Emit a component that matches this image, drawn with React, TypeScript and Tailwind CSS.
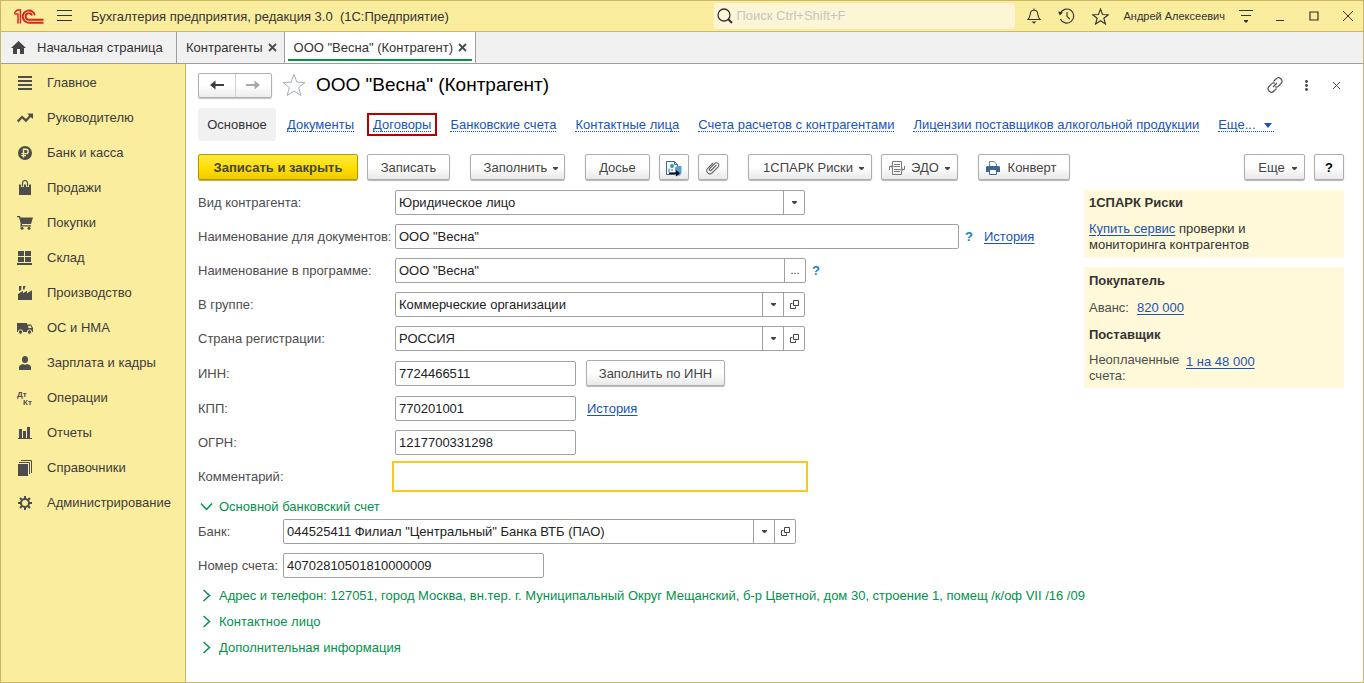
import React, { useState } from 'react';
import clsx from 'clsx';

type IconProps = { className?: string };

/* ---------- Icons ---------- */

const Logo = () => (
  <svg width="30" height="15" viewBox="0 0 30 15" fill="none" stroke="#d9241f" strokeWidth="1.9" aria-label="1С">
    <path d="M0 4.2 L3.2 1 H6.4 V14.6 M4 4.5 V14.6 M0.6 5 H4" strokeWidth="1.5" />
    <path d="M20.8 6.2 A6.1 6.1 0 1 0 15 13.7 H29.5" />
    <path d="M17.9 6.6 A3.2 3.2 0 1 0 15 10.7 H29.5" />
  </svg>
);

const MenuIcon = () => (
  <svg width="15" height="12" viewBox="0 0 15 12" fill="#333">
    <path d="M0 0h15v1H0zM0 5h15v1H0zM0 10h15v1H0z" />
  </svg>
);

const SearchIcon = () => (
  <svg width="16" height="16" viewBox="0 0 16 16" fill="none" stroke="#333">
    <circle cx="7" cy="7" r="6" strokeWidth="1.3" />
    <path d="M11 11 L15 15" strokeWidth="2" />
  </svg>
);

const BellIcon = () => (
  <svg width="14" height="16" viewBox="0 0 14 16" fill="none" stroke="#333" strokeWidth="1.1">
    <path d="M7 0.5 V2 M1 11.5 C3 9.5 3 8.5 3.2 6 C3.4 3.5 5 2.2 7 2.2 C9 2.2 10.6 3.5 10.8 6 C11 8.5 11 9.5 13 11.5 Z" />
    <path d="M4.5 13.5 H9.5 L7 15.8 Z" fill="#333" stroke="none" />
  </svg>
);

const HistoryIcon = () => (
  <svg width="17" height="16" viewBox="0 0 17 16" fill="none" stroke="#333" strokeWidth="1.2">
    <path d="M2.2 5.5 A7 7 0 1 1 2.4 11" />
    <path d="M9 4 V8.3 L11.8 11.2" />
    <path d="M0 3.6 L5 4.6 L1.8 7.6 Z" fill="#333" stroke="none" />
  </svg>
);

const StarIcon = ({ className }: IconProps) => (
  <svg className={className} viewBox="0 0 24 24" fill="none" stroke="currentColor">
    <path d="M12 1.5 L14.9 9.2 L23 9.5 L16.7 14.5 L18.9 22.5 L12 18 L5.1 22.5 L7.3 14.5 L1 9.5 L9.1 9.2 Z" />
  </svg>
);

const SettingsMenuIcon = () => (
  <svg width="14" height="14" viewBox="0 0 14 14" fill="#333">
    <path d="M0 1h14v1H0zM2 6h10v1H2zM5 11h4v1L7 14L5 12z" />
  </svg>
);

const CloseIcon = () => (
  <svg width="9" height="9" viewBox="0 0 9 9" stroke="#4a4a4a" strokeWidth="1.8">
    <path d="M1 1 L8 8 M8 1 L1 8" />
  </svg>
);

const Caret = ({ className }: IconProps) => (
  <svg className={clsx('shrink-0', className)} width="5" height="3" viewBox="0 0 5 3" fill="currentColor">
    <path d="M0 0h5v1L3 3H2L0 1z" />
  </svg>
);

const OpenIcon = () => (
  <svg width="9" height="9" viewBox="0 0 9 9" fill="none" stroke="#444">
    <path d="M3.5 0.5h5v5h-5z M2.5 3.5h-2v5h5v-2" />
  </svg>
);

const Chevron = ({ open }: { open?: boolean }) => (
  <svg className={clsx('h-[13px] w-[13px]', open && 'rotate-90')} viewBox="0 0 13 13" fill="none" stroke="#00924a" strokeWidth="1.5">
    <path d="M3.5 1 L9.5 6.5 L3.5 12" />
  </svg>
);

/* ---------- Section menu ---------- */

const SideIcon: React.FC<{ children: React.ReactNode }> = ({ children }) => (
  <svg width="16" height="16" viewBox="0 0 16 16" fill="#4d4d4d">
    {children}
  </svg>
);

const sections = [
  { label: 'Главное', icon: <path d="M1 1h14v2H1zM1 5h14v2H1zM1 9h14v2H1zM1 13h14v2H1z" /> },
  {
    label: 'Руководителю',
    icon: <path d="M0 10.5 L5 5.5 L9 9 L12.2 5.6 L10.2 3.4 H16 V9 L13.8 7 L9 12.2 L5 8.6 L1.5 12.5 Z" />,
  },
  {
    label: 'Банк и касса',
    icon: (
      <>
        <circle cx="8" cy="8" r="7" />
        <path d="M6.5 12.5 V4.2 H9 A2.2 2.2 0 0 1 9 8.6 H4.5 M4.5 10.6 H9" fill="none" stroke="#fbed9e" strokeWidth="1.4" />
      </>
    ),
  },
  {
    label: 'Продажи',
    icon: (
      <>
        <path d="M2 4.5 H14 V15 H2 Z" />
        <path d="M5.5 7 V3.5 A2.5 2.5 0 0 1 10.5 3.5 V7" fill="none" stroke="#fbed9e" strokeWidth="3" />
        <path d="M5.5 6.5 V3 A2.5 2.5 0 0 1 10.5 3 V6.5" fill="none" stroke="#4d4d4d" strokeWidth="1.2" />
      </>
    ),
  },
  {
    label: 'Покупки',
    icon: (
      <>
        <path d="M0 1 H3 L3.6 2.5 H16 L14 9 H5.2 L4.8 10.3 H14 V11.6 H3 L3.8 8.8 L2 2.3 H0 Z" />
        <circle cx="5" cy="13.3" r="1.5" />
        <circle cx="12" cy="13.3" r="1.5" />
      </>
    ),
  },
  { label: 'Склад', icon: <path d="M1 1h6v5H1zM8 1h6v5H8zM1 7h6v5H1zM8 7h6v5H8zM0 13h15v2H0z" /> },
  {
    label: 'Производство',
    icon: <path d="M1 15 V9 L6 5.8 V8.2 L10 5.8 V8.2 L15 5.2 V15 Z M2 1 H4.5 L4.2 5 L2 6.3 Z M6 1 H8.5 L7.5 4.5 L6 4.5 Z" />,
  },
  {
    label: 'ОС и НМА',
    icon: (
      <>
        <path d="M0 3 H10 V12 H0 Z M10 4.5 H14 L16 8 V12 H10 Z" />
        <path d="M11.3 5.7 H13.5 L14.7 8 H11.3 Z" fill="#fbed9e" />
        <circle cx="3.5" cy="12" r="2.2" stroke="#fbed9e" />
        <circle cx="12.5" cy="12" r="2.2" stroke="#fbed9e" />
      </>
    ),
  },
  {
    label: 'Зарплата и кадры',
    icon: (
      <>
        <ellipse cx="8" cy="4.5" rx="3" ry="3.5" />
        <path d="M2 15 V12 C2 10.5 4 9.5 6 9 Q8 10.5 10 9 C12 9.5 14 10.5 14 12 V15 Z" />
      </>
    ),
  },
  {
    label: 'Операции',
    icon: (
      <g fontFamily="Liberation Sans" fontWeight="700" fontSize="8">
        <text x="0" y="7">Дт</text>
        <text x="6" y="15">Кт</text>
      </g>
    ),
  },
  { label: 'Отчеты', icon: <path d="M2 4h3v9H2zM6 6h3v7H6zM10 2h3v11h-3zM1 13h14v1H1z" /> },
  {
    label: 'Справочники',
    icon: (
      <>
        <path d="M1 4h10v12H1z" />
        <path d="M2 2.5 H12.5 V14 M4 0.5 H14.5 V13" fill="none" stroke="#4d4d4d" />
      </>
    ),
  },
  {
    label: 'Администрирование',
    icon: (
      <>
        <circle cx="8" cy="8" r="4" fill="none" stroke="#4d4d4d" strokeWidth="2" />
        <path
          d="M8 1V4M8 12V15M1 8H4M12 8H15M3 3L5 5M11 11L13 13M13 3L11 5M3 13L5 11"
          stroke="#4d4d4d"
          strokeWidth="2"
        />
      </>
    ),
  },
];

const SectionMenu = () => (
  <nav className="w-[185px] shrink-0 border-r border-[#c8b866] bg-[#fbed9e] pt-px">
    <ul>
      {sections.map(s => (
        <li key={s.label}>
          <a href="#" className="flex h-[35px] items-center gap-[14px] pl-4 text-[#3b3b3b]">
            <SideIcon>{s.icon}</SideIcon>
            {s.label}
          </a>
        </li>
      ))}
    </ul>
  </nav>
);

/* ---------- Window header ---------- */

const TitleBar = () => (
  <header className="flex h-[31px] items-center border-b border-[#c8b866] bg-[#fbed9e] pl-[13px] pr-[10px] text-[#333]">
    <Logo />
    <button type="button" aria-label="Меню" className="ml-[13px]">
      <MenuIcon />
    </button>
    <h1 className="ml-[19px] whitespace-nowrap pt-0.5">Бухгалтерия предприятия, редакция 3.0&nbsp; (1С:Предприятие)</h1>
    <label className="ml-auto flex h-[26px] w-[301px] items-center gap-[3px] rounded-[3px] bg-[#fdf6d6] pl-[3px]">
      <SearchIcon />
      <input
        type="search"
        aria-label="Поиск"
        placeholder="Поиск Ctrl+Shift+F"
        className="min-w-0 flex-1 bg-transparent outline-none placeholder:text-[#c4c4c4]"
      />
    </label>
    <div className="ml-3 flex items-center gap-[17px]">
      <button type="button" aria-label="Уведомления"><BellIcon /></button>
      <button type="button" aria-label="История"><HistoryIcon /></button>
      <button type="button" aria-label="Избранное"><StarIcon className="h-[17px] w-[17px] stroke-[1.6]" /></button>
    </div>
    <span className="ml-[14px] whitespace-nowrap text-[11px]">Андрей Алексеевич</span>
    <button type="button" aria-label="Настройки" className="ml-[14px]"><SettingsMenuIcon /></button>
    <div className="ml-[22px] flex items-center gap-6">
      <button type="button" aria-label="Свернуть">
        <svg width="10" height="10" viewBox="0 0 10 10" fill="#333"><path d="M1 9h8v1H1z" /></svg>
      </button>
      <button type="button" aria-label="Развернуть">
        <svg width="10" height="10" viewBox="0 0 10 10" fill="none" stroke="#333" strokeWidth="1.2"><path d="M1 1h8v8H1z" /></svg>
      </button>
      <button type="button" aria-label="Закрыть">
        <svg width="10" height="10" viewBox="0 0 10 10" stroke="#333"><path d="M0 0 L10 10 M10 0 L0 10" /></svg>
      </button>
    </div>
  </header>
);

const WindowTabs = () => (
  <div className="flex h-8 border-b border-[#9f9f9f] bg-[#f1f1f1] text-[#333]">
    <a href="#" className="flex w-[176px] items-center gap-[11px] border-r border-[#9f9f9f] pl-[10px]">
      <svg width="15" height="13" viewBox="0 0 15 13" fill="#444">
        <path d="M7.5 0 L15 7 H13 V13 H9 V8 H6 V13 H2 V7 H0 Z" />
      </svg>
      Начальная страница
    </a>
    <div className="flex items-center gap-[5px] border-r border-[#9f9f9f] pl-[9px] pr-[7px]">
      <a href="#">Контрагенты</a>
      <button type="button" aria-label="Закрыть Контрагенты"><CloseIcon /></button>
    </div>
    <div className="flex flex-col border-r border-[#9f9f9f] bg-white px-[3px] pb-[2px]">
      <div className="flex flex-1 items-center gap-[5px] border-b-2 border-[#009646] pl-[6px] pr-[5px] pt-1">
        <a href="#">ООО "Весна" (Контрагент)</a>
        <button type="button" aria-label="Закрыть ООО Весна"><CloseIcon /></button>
      </div>
    </div>
  </div>
);

/* ---------- Form controls ---------- */

type BtnProps = React.ButtonHTMLAttributes<HTMLButtonElement> & { primary?: boolean };

const Btn: React.FC<BtnProps> = ({ primary, className, children, ...rest }) => (
  <button
    type="button"
    className={clsx(
      'flex h-[26px] shrink-0 items-center justify-center whitespace-nowrap rounded-[2px] border pt-0.5',
      primary
        ? 'border-[#b09c00] bg-linear-to-b from-[#ffe838] via-[#ffe000] to-[#f0cb00] font-bold text-[#444] shadow-[0_1px_1px_#b5a850]'
        : 'border-[#aeaeae] bg-linear-to-b from-white from-50% to-[#e8e8e8] text-[#444] shadow-[0_1px_1px_#b5b5b5]',
      className,
    )}
    {...rest}
  >
    {children}
  </button>
);

const fieldBox = 'h-[25px] rounded-[2px] border border-[#a0a0a0] bg-white text-[#222]';

type RowProps = { id: string; label: string; labelClass?: string; children: React.ReactNode };

const Row: React.FC<RowProps> = ({ id, label, labelClass = 'w-[197px]', children }) => (
  <div className="flex items-center">
    <label htmlFor={id} className={clsx('shrink-0 whitespace-nowrap text-[#4d4d4d]', labelClass)}>
      {label}
    </label>
    {children}
  </div>
);

const TextField = ({ id, value, className }: { id: string; value: string; className?: string }) => (
  <input id={id} defaultValue={value} className={clsx(fieldBox, 'px-[3px]', className)} />
);

type SelectFieldProps = { id: string; value: string; className?: string; withOpen?: boolean };

const SelectField = ({ id, value, className, withOpen }: SelectFieldProps) => (
  <div className={clsx(fieldBox, 'flex', className)}>
    <div className="relative min-w-0 flex-1">
      <select id={id} className="h-full w-full appearance-none pl-[3px] outline-none">
        <option>{value}</option>
      </select>
      <span className="pointer-events-none absolute inset-y-0 right-0 flex w-[21px] items-center justify-center border-l border-[#a0a0a0]">
        <Caret className="text-[#444]" />
      </span>
    </div>
    {withOpen && (
      <button type="button" aria-label="Открыть" className="flex w-[21px] items-center justify-center border-l border-[#a0a0a0]">
        <OpenIcon />
      </button>
    )}
  </div>
);

const link = 'text-[#1a54b8] underline underline-offset-2';

/* ---------- Page ---------- */

const FormHeader = () => (
  <div className="flex h-[26px] items-center">
    <div className="flex h-[25px] w-[74px] rounded-[2px] border border-[#b0b0b0] bg-linear-to-b from-white from-50% to-[#ececec] shadow-[0_1px_1px_#c0c0c0]">
      <button type="button" aria-label="Назад" className="flex flex-1 items-center justify-center border-r border-[#cfcfcf]">
        <svg width="14" height="10" viewBox="0 0 14 10" fill="#3c3c3c"><path d="M0 5 L5.5 0.5 V4 H14 V6 H5.5 V9.5 Z" /></svg>
      </button>
      <button type="button" aria-label="Вперед" className="flex flex-1 items-center justify-center">
        <svg width="14" height="10" viewBox="0 0 14 10" fill="#a8a8a8"><path d="M14 5 L8.5 0.5 V4 H0 V6 H8.5 V9.5 Z" /></svg>
      </button>
    </div>
    <button type="button" aria-label="В избранное" className="ml-[10px]">
      <StarIcon className="h-6 w-6 text-[#a9b0b6]" />
    </button>
    <h2 className="ml-[10px] whitespace-nowrap text-[19px] text-black">ООО "Весна" (Контрагент)</h2>
    <div className="ml-auto flex items-center gap-[19px] pr-px">
      <button type="button" aria-label="Получить ссылку">
        <svg width="16" height="16" viewBox="0 0 16 16" fill="none" stroke="#555" strokeWidth="1.2">
          <path d="M6.5 4.5 L9 2 A3 3 0 0 1 14 6.5 L11.2 9.3 A2.8 2.8 0 0 1 8 9.8" />
          <path d="M9.5 11.5 L7 14 A3 3 0 0 1 2 9.5 L4.8 6.7 A2.8 2.8 0 0 1 8 6.2" />
          <path d="M6 10 L10 6" />
        </svg>
      </button>
      <button type="button" aria-label="Еще действия" className="px-[3px]">
        <svg width="3" height="11" viewBox="0 0 3 11" fill="#444">
          <circle cx="1.5" cy="1.5" r="1.4" />
          <circle cx="1.5" cy="5.5" r="1.4" />
          <circle cx="1.5" cy="9.5" r="1.4" />
        </svg>
      </button>
      <button type="button" aria-label="Закрыть" className="px-[3px]">
        <svg width="7" height="7" viewBox="0 0 7 7" stroke="#444"><path d="M0 0 L7 7 M7 0 L0 7" /></svg>
      </button>
    </div>
  </div>
);

const formLinks = [
  'Документы',
  'Договоры',
  'Банковские счета',
  'Контактные лица',
  'Счета расчетов с контрагентами',
  'Лицензии поставщиков алкогольной продукции',
];

const dotted = 'border-b border-dotted border-[#1a54b8] pt-[2px] leading-[12px] text-[#1a54b8]';

const FormNav = () => (
  <nav className="mt-[10px] flex h-[33px] items-center gap-[19px] whitespace-nowrap">
    <span className="-mr-2 flex h-full w-[78px] items-center justify-center rounded-[3px] bg-[#f1f1f1] text-[#333]">
      Основное
    </span>
    {formLinks.map(name => (
      <span key={name} className={clsx(name === 'Договоры' && '-mx-[6px] border-2 border-[#b80000] px-1 py-[2px]')}>
        <a href="#" className={clsx('block', dotted)}>{name}</a>
      </span>
    ))}
    <a href="#" className={clsx('flex items-center gap-2 pr-[2px]', dotted)}>
      Еще...
      <svg width="8" height="5" viewBox="0 0 8 5" fill="#1a54b8"><path d="M0 0h8L4 5z" /></svg>
    </a>
  </nav>
);

const Toolbar = () => (
  <div className="mt-[13px] flex items-center gap-[9px]">
    <Btn primary className="w-[160px]">Записать и закрыть</Btn>
    <Btn className="w-[83px]">Записать</Btn>
    <Btn className="ml-[11px] w-[95px] gap-[6px] pl-[7px]">Заполнить <Caret /></Btn>
    <Btn className="ml-[11px] w-[65px]">Досье</Btn>
    <Btn className="w-[30px]" aria-label="Перейти">
      <svg width="18" height="17" viewBox="0 0 18 17" fill="none">
        <path d="M1.5 1.5 H9.5 L12.5 4.5 V14.5 H1.5 Z" fill="#fff" stroke="#3d6590" />
        <path d="M9.5 1.5 V4.5 H12.5" stroke="#3d6590" />
        <circle cx="7" cy="6" r="2" fill="#1f9cc4" />
        <path d="M4 8.5 V12 M6 10 H8" stroke="#3d6590" />
        <path d="M10 7.5 L12 6 H16.5 V13 L15 15.5 H10 Z" fill="#5a9dd2" />
        <path d="M4 13.2 H13" stroke="#111" strokeWidth="1.6" />
        <path d="M11 10 L15 13.2 L11 16.4 Z" fill="#111" />
      </svg>
    </Btn>
    <Btn className="w-[30px]" aria-label="Присоединенные файлы">
      <svg width="14" height="14" viewBox="0 0 14 14" fill="none" stroke="#666" strokeWidth="1.1">
        <path d="M10.5 4 L5 9.5 A1.2 1.2 0 0 1 3.4 7.9 L8.8 2.5 A2.3 2.3 0 0 1 12.2 5.8 L6 12 A3.2 3.2 0 0 1 1.5 7.5 L7 2" />
      </svg>
    </Btn>
    <Btn className="ml-[11px] w-[124px] gap-[6px] pl-[7px]">1СПАРК Риски <Caret /></Btn>
    <Btn className="w-[77px] gap-[6px]">
      <svg width="16" height="14" viewBox="0 0 16 14" fill="none" stroke="#777">
        <path d="M3.5 4 V0.5 H12.5 V7 M3.5 7 V13.5 H12.5 V10 M5 3.5 H11 M5 5.5 H11 M5 8.5 H11 M5 10.5 H11" />
        <path d="M0.5 9 V5.5 H3 M15.5 5 V8.5 H13" />
        <path d="M2.5 3.5 L5 5.5 L2.5 7.5 Z M13.5 6.5 L11 8.5 L13.5 10.5 Z" fill="#777" stroke="none" />
      </svg>
      <span className="flex items-center gap-[6px]">ЭДО <Caret /></span>
    </Btn>
    <Btn className="ml-[11px] w-[92px] gap-2 pr-[6px]">
      <svg width="14" height="14" viewBox="0 0 14 14">
        <path d="M3.5 6 V0.5 H8 L10.5 3 V6" fill="#fff" stroke="#5f7fa3" />
        <path d="M1 5 H13 L14 6 V11 H0 V6 Z" fill="#3f668f" />
        <path d="M3.5 8.5 H10.5 V13.5 H3.5 Z" fill="#fff" stroke="#3f668f" />
      </svg>
      Конверт
    </Btn>
    <Btn className="ml-auto w-[61px] gap-[7px] pl-[6px]">Еще <Caret /></Btn>
    <Btn className="w-[30px]" aria-label="Справка"><b className="text-black">?</b></Btn>
  </div>
);

const Help = () => (
  <button type="button" aria-label="Подсказка" className="ml-[6px] w-2 font-bold text-[#1583c4]">?</button>
);

const InfoPanel = () => (
  <aside className="flex w-[260px] shrink-0 flex-col gap-[9px] leading-4 text-[#333]">
    <section className="bg-[#fff9d9] px-[5px] py-[5px]">
      <h3 className="font-bold">1СПАРК Риски</h3>
      <p className="mt-[10px] w-[170px]">
        <a href="#" className={link}>Купить сервис</a> проверки и мониторинга контрагентов
      </p>
    </section>
    <section className="bg-[#fff9d9] px-[5px] pb-[4px] pt-[6px]">
      <h3 className="font-bold">Покупатель</h3>
      <div className="mt-[11px] flex gap-2 text-[#4d4d4d]">
        Аванс: <a href="#" className={link}>820 000</a>
      </div>
      <h3 className="mt-[11px] font-bold">Поставщик</h3>
      <div className="mt-[9px] flex gap-[9px] text-[#4d4d4d]">
        <span className="w-[88px]">Неоплаченные счета:</span>
        <a href="#" className={clsx(link, 'pt-0.5')}>1 на 48 000</a>
      </div>
    </section>
  </aside>
);

const Group: React.FC<{ title: string; open?: boolean; onClick?: () => void }> = ({ title, open, onClick }) => (
  <button type="button" onClick={onClick} aria-expanded={!!open} className="flex h-[26px] items-center gap-[6px] whitespace-nowrap pl-[2px] text-[#00924a]">
    <Chevron open={open} />
    <span className="pt-0.5">{title}</span>
  </button>
);

export default function App() {
  const [bankOpen, setBankOpen] = useState(true);

  return (
    <div className="flex min-h-screen flex-col border border-[#c8b866] bg-white font-['Liberation_Sans',Arial,sans-serif] text-[13px]">
      <TitleBar />
      <WindowTabs />
      <div className="flex flex-1">
        <SectionMenu />
        <main className="min-w-0 flex-1 pb-5 pl-3 pr-[19px] pt-2">
          <FormHeader />
          <FormNav />
          <Toolbar />

          <div className="mt-[10px] flex">
            <form className="min-w-0 flex-1">
              <div className="flex flex-col gap-[9px]">
                <Row id="kind" label="Вид контрагента:">
                  <SelectField id="kind" value="Юридическое лицо" className="w-[410px]" />
                </Row>
                <Row id="docName" label="Наименование для документов:">
                  <TextField id="docName" value='ООО "Весна"' className="w-[564px]" />
                  <Help />
                  <a href="#" className={clsx(link, 'ml-[11px]')}>История</a>
                </Row>
                <Row id="appName" label="Наименование в программе:">
                  <div className={clsx(fieldBox, 'flex w-[411px]')}>
                    <input id="appName" defaultValue='ООО "Весна"' className="min-w-0 flex-1 px-[3px] outline-none" />
                    <button type="button" aria-label="Выбрать" className="w-[21px] border-l border-[#a0a0a0] text-[11px]">...</button>
                  </div>
                  <Help />
                </Row>
                <Row id="group" label="В группе:">
                  <SelectField id="group" value="Коммерческие организации" className="w-[410px]" withOpen />
                </Row>
                <Row id="country" label="Страна регистрации:">
                  <SelectField id="country" value="РОССИЯ" className="w-[410px]" withOpen />
                </Row>
                <Row id="inn" label="ИНН:">
                  <TextField id="inn" value="7724466511" className="w-[181px]" />
                  <Btn className="mb-px ml-[10px] w-[139px]">Заполнить по ИНН</Btn>
                </Row>
                <Row id="kpp" label="КПП:">
                  <TextField id="kpp" value="770201001" className="w-[181px]" />
                  <a href="#" className={clsx(link, 'ml-[11px]')}>История</a>
                </Row>
                <Row id="ogrn" label="ОГРН:">
                  <TextField id="ogrn" value="1217700331298" className="w-[181px]" />
                </Row>
                <Row id="comment" label="Комментарий:">
                  <input
                    id="comment"
                    className="h-[25px] w-[410px] px-[3px] outline-2 outline-offset-1 outline-[#fbc91d]"
                  />
                </Row>
              </div>

              <div className="mt-1">
                <Group title="Основной банковский счет" open={bankOpen} onClick={() => setBankOpen(!bankOpen)} />
              </div>
              {bankOpen && (
                <div className="flex flex-col gap-[9px]">
                  <Row id="bank" label="Банк:" labelClass="w-[85px]">
                    <SelectField id="bank" value='044525411 Филиал "Центральный" Банка ВТБ (ПАО)' className="w-[513px]" withOpen />
                  </Row>
                  <Row id="account" label="Номер счета:" labelClass="w-[85px]">
                    <TextField id="account" value="40702810501810000009" className="w-[261px]" />
                  </Row>
                </div>
              )}
            </form>
            <InfoPanel />
          </div>

          <div className="mt-1 flex flex-col items-start">
            <Group title="Адрес и телефон: 127051, город Москва, вн.тер. г. Муниципальный Округ Мещанский, б-р Цветной, дом 30, строение 1, помещ /к/оф VII /16 /09" />
            <Group title="Контактное лицо" />
            <Group title="Дополнительная информация" />
          </div>
        </main>
      </div>
    </div>
  );
}
